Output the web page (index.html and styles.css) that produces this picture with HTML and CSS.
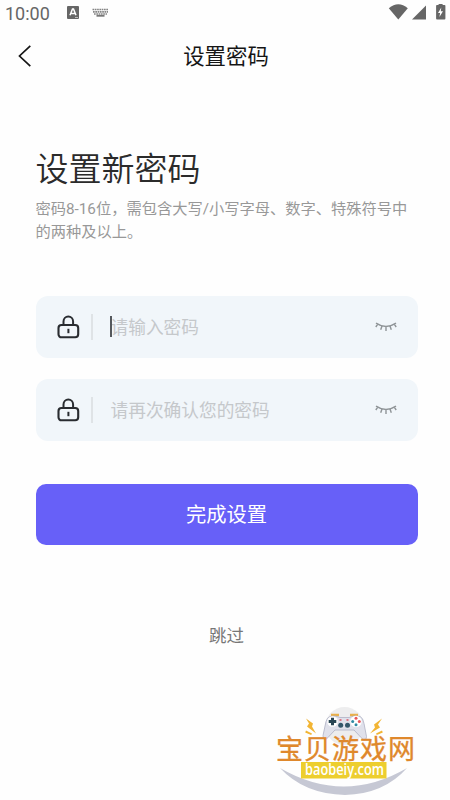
FILE: index.html
```html
<!DOCTYPE html>
<html lang="zh-CN">
<head>
<meta charset="utf-8">
<meta name="viewport" content="width=device-width, initial-scale=1">
<title>设置密码</title>
<link rel="stylesheet" href="styles.css">
</head>
<body>
<svg width="0" height="0" class="defs" aria-hidden="true">
  <symbol id="lock" viewBox="0 0 24 26">
    <path d="M7.5 11V7.400a4.800 4.800 0 0 1 9.600 0V11" fill="none" stroke="#292c30" stroke-width="2"/>
    <rect x="2.500" y="11" width="19.700" height="12.300" rx="3" fill="none" stroke="#292c30" stroke-width="2.100"/>
    <path d="M12.400 14.800v4.400" stroke="#292c30" stroke-width="2"/>
  </symbol>
  <symbol id="eye" viewBox="0 0 24 14">
    <path d="M2 3.200Q12 9.900 22 3.200M3.600 4.300L1.800 7M7.900 6.200L6.700 9.700M12 6.700v4.200M16.100 6.200l1.200 3.500M20.400 4.300l1.800 2.700" fill="none" stroke="#8f9497" stroke-width="1.400"/>
  </symbol>
</svg>
<div class="screen">
  <div class="status">
    <span class="time">10:00</span>
    <svg class="badge-a" width="12" height="14" viewBox="0 0 12 14"><rect width="12" height="13" rx="1" fill="#666"/><path d="M3 9.2L5.5 3h1L9 9.2M4 7.4h4" fill="none" stroke="#fff" stroke-width="1.5"/><path d="M8 11.5h3" stroke="#bbb"/></svg>
    <svg class="keyboard" width="17" height="10" viewBox="0 0 17 10"><path d="M.5 1.500h16M1 3.800h15M2 6h13" stroke="#858585" stroke-width="1.700" stroke-dasharray="1.700 .6"/><path d="M4.500 7.800h8" stroke="#777" stroke-width="1.800"/></svg>
    <svg class="signals" width="60" height="18" viewBox="0 0 60 18">
      <g fill="#666"><path d="M1.800 4.200Q11.300-3.500 20.800 4.200L11.300 15.500z"/><path d="M39 1.500v14H25z"/><path d="M51.600.9V0h4v.9h1.900q.9 0 .9.900v12.700q0 1-.9 1h-7.500q-.9 0-.9-1V1.800q0-.9.900-.9z"/></g>
      <path d="M54.300 3.500L51 9h2.100l-.7 4L56 7.300h-2.200z" fill="#fff"/>
    </svg>
  </div>
  <header class="nav">
    <svg class="back" width="14" height="22" viewBox="0 0 14 22"><path d="M12.300 .8L1.500 11l10.800 10.200" fill="none" stroke="#151515" stroke-width="1.700"/></svg>
    <div class="nav-title">设置密码</div>
  </header>
  <main>
    <h1>设置新密码</h1>
    <p class="hint">密码8-16位，需包含大写/小写字母、数字、特殊符号中<br>的两种及以上。</p>
    <div class="field">
      <svg class="lock" width="24" height="26"><use href="#lock"/></svg>
      <span class="divider"></span>
      <span class="placeholder focused">请输入密码</span>
      <svg class="eye" width="24" height="14"><use href="#eye"/></svg>
    </div>
    <div class="field">
      <svg class="lock" width="24" height="26"><use href="#lock"/></svg>
      <span class="divider"></span>
      <span class="placeholder">请再次确认您的密码</span>
      <svg class="eye" width="24" height="14"><use href="#eye"/></svg>
    </div>
    <button class="submit">完成设置</button>
    <div class="skip">跳过</div>
  </main>
  <svg class="watermark" width="160" height="100" viewBox="0 0 160 100">
    <circle cx="79.500" cy="31" r="19" fill="#ededee"/>
    <path d="M15 73Q79 110 142 73Q119 99 80 100Q39 99 15 73z" fill="#c6c8d4"/>
    <g transform="translate(0 4.500)">
      <g fill="#f2b534"><path d="M41 19l7 5-1 3 4 7-9-7 2-3z"/><path d="M117 19l-8 6 1 3-5 6 10-6-2-3z"/><path d="M41 31l6 3-.8 1.500-6-2.500zM117 31l-6 3 .8 1.500 6-2.500z"/></g>
      <path d="M66 15.500h8M85 15.500h8" stroke="#e9b04c" stroke-width="2.500"/>
      <path d="M65 17Q70 15.500 75 18h9Q89 15.500 95 17Q98 18 99 24l2.500 13Q101 42 98 40L89 30.500H70L61 40Q58 41 58 36l3-14Q62 18 65 17z" fill="#e0e1eb" stroke="#aeb1c4" stroke-width=".8"/>
      <circle cx="67.500" cy="22" r="5.300" fill="#fff"/><circle cx="91" cy="22" r="5.700" fill="#fff"/>
      <path d="M67.500 18.200v7.600M63.700 22h7.600" stroke="#294654" stroke-width="3"/>
      <g fill="#e9575b"><circle cx="91" cy="18.700" r="1.500"/><circle cx="94.300" cy="22" r="1.500"/></g>
      <g fill="#318ba4"><circle cx="87.700" cy="22" r="1.500"/><circle cx="91" cy="25.300" r="1.500"/></g>
      <path d="M74.500 20.500h2M81.500 20.500h2" stroke="#db5362" stroke-width="1.300"/>
      <circle cx="75.700" cy="25.800" r="2.500" fill="#34576a"/><circle cx="82.500" cy="25.800" r="2.500" fill="#34576a"/>
    </g>
    <rect x="36" y="67" width="85.500" height="16.500" fill="#edce2e"/>
    <text class="wm-cn" x="11" y="63.500" textLength="139" lengthAdjust="spacing">宝贝游戏网</text>
    <text class="wm-url" x="40" y="79.500" textLength="79" lengthAdjust="spacingAndGlyphs">baobeiy.com</text>
  </svg>
</div>
</body>
</html>
```
FILE: styles.css
```css
* { box-sizing: border-box; }
body {
  margin: 0;
  background: #fefefe;
  font-family: Roboto, "Noto Sans CJK SC", sans-serif;
}
svg { display: block; flex: none; }
.defs { position: absolute; }
.screen {
  position: relative;
  width: 450px;
  height: 800px;
  overflow: hidden;
}
.status {
  display: flex;
  align-items: flex-start;
  height: 26px;
  padding: 4px 3px 0 5px;
  color: #666;
}
.time { width: 62px; font-size: 18px; line-height: 19px; }
.badge-a { margin-top: 2px; }
.keyboard { margin: 4px 0 0 13px; }
.signals { margin-left: auto; }
.nav {
  display: grid;
  grid-template-columns: 50px 1fr 50px;
  align-items: center;
  height: 60px;
  color: #151515;
}
.back { margin-left: 18px; }
.nav-title {
  padding: 1px 0 0 2px;
  text-align: center;
  font-size: 21.4px;
  line-height: 30px;
}
main { padding: 60px 32.5px 0 35.5px; }
h1 {
  margin: 0;
  color: #2b2b2b;
  font-size: 33px;
  font-weight: 350;
  line-height: 48px;
}
.hint {
  margin: 4px 0 52px;
  color: #989898;
  font-size: 15.25px;
  line-height: 23px;
  white-space: nowrap;
}
.field {
  display: flex;
  align-items: center;
  height: 62px;
  margin-bottom: 20.5px;
  padding: 0 20px;
  border-radius: 12px;
  background: #f1f6fa;
}
.divider { width: 1.5px; height: 26px; margin-left: 11.5px; background: #dfe3e6; }
.placeholder {
  position: relative;
  flex: 1;
  margin-left: 18px;
  padding-top: 2px;
  color: #c5c8cb;
  font-size: 17.7px;
  line-height: 26px;
}
.focused::before {
  content: "";
  position: absolute;
  left: -1px;
  top: 3px;
  width: 2px;
  height: 21px;
  background: #54585c;
}
.submit {
  display: block;
  width: 100%;
  height: 61.5px;
  margin: 43px 0 0;
  padding: 2px 0 0;
  border: 0;
  border-radius: 10px;
  background: #6760f8;
  color: #fff;
  font: 20.3px/30px Roboto, "Noto Sans CJK SC", sans-serif;
}
.skip {
  margin-top: 78px;
  text-align: center;
  color: #777;
  font-size: 17.5px;
  line-height: 26px;
}
.watermark { position: absolute; left: 265px; top: 695px; }
.wm-cn {
  fill: #df882c;
  font: 400 27px "Noto Sans CJK SC", sans-serif;
  stroke: #df882c;
  stroke-width: .3px;
}
.wm-url {
  fill: #fff;
  font: 600 15.5px "Open Sans", sans-serif;
}
```
